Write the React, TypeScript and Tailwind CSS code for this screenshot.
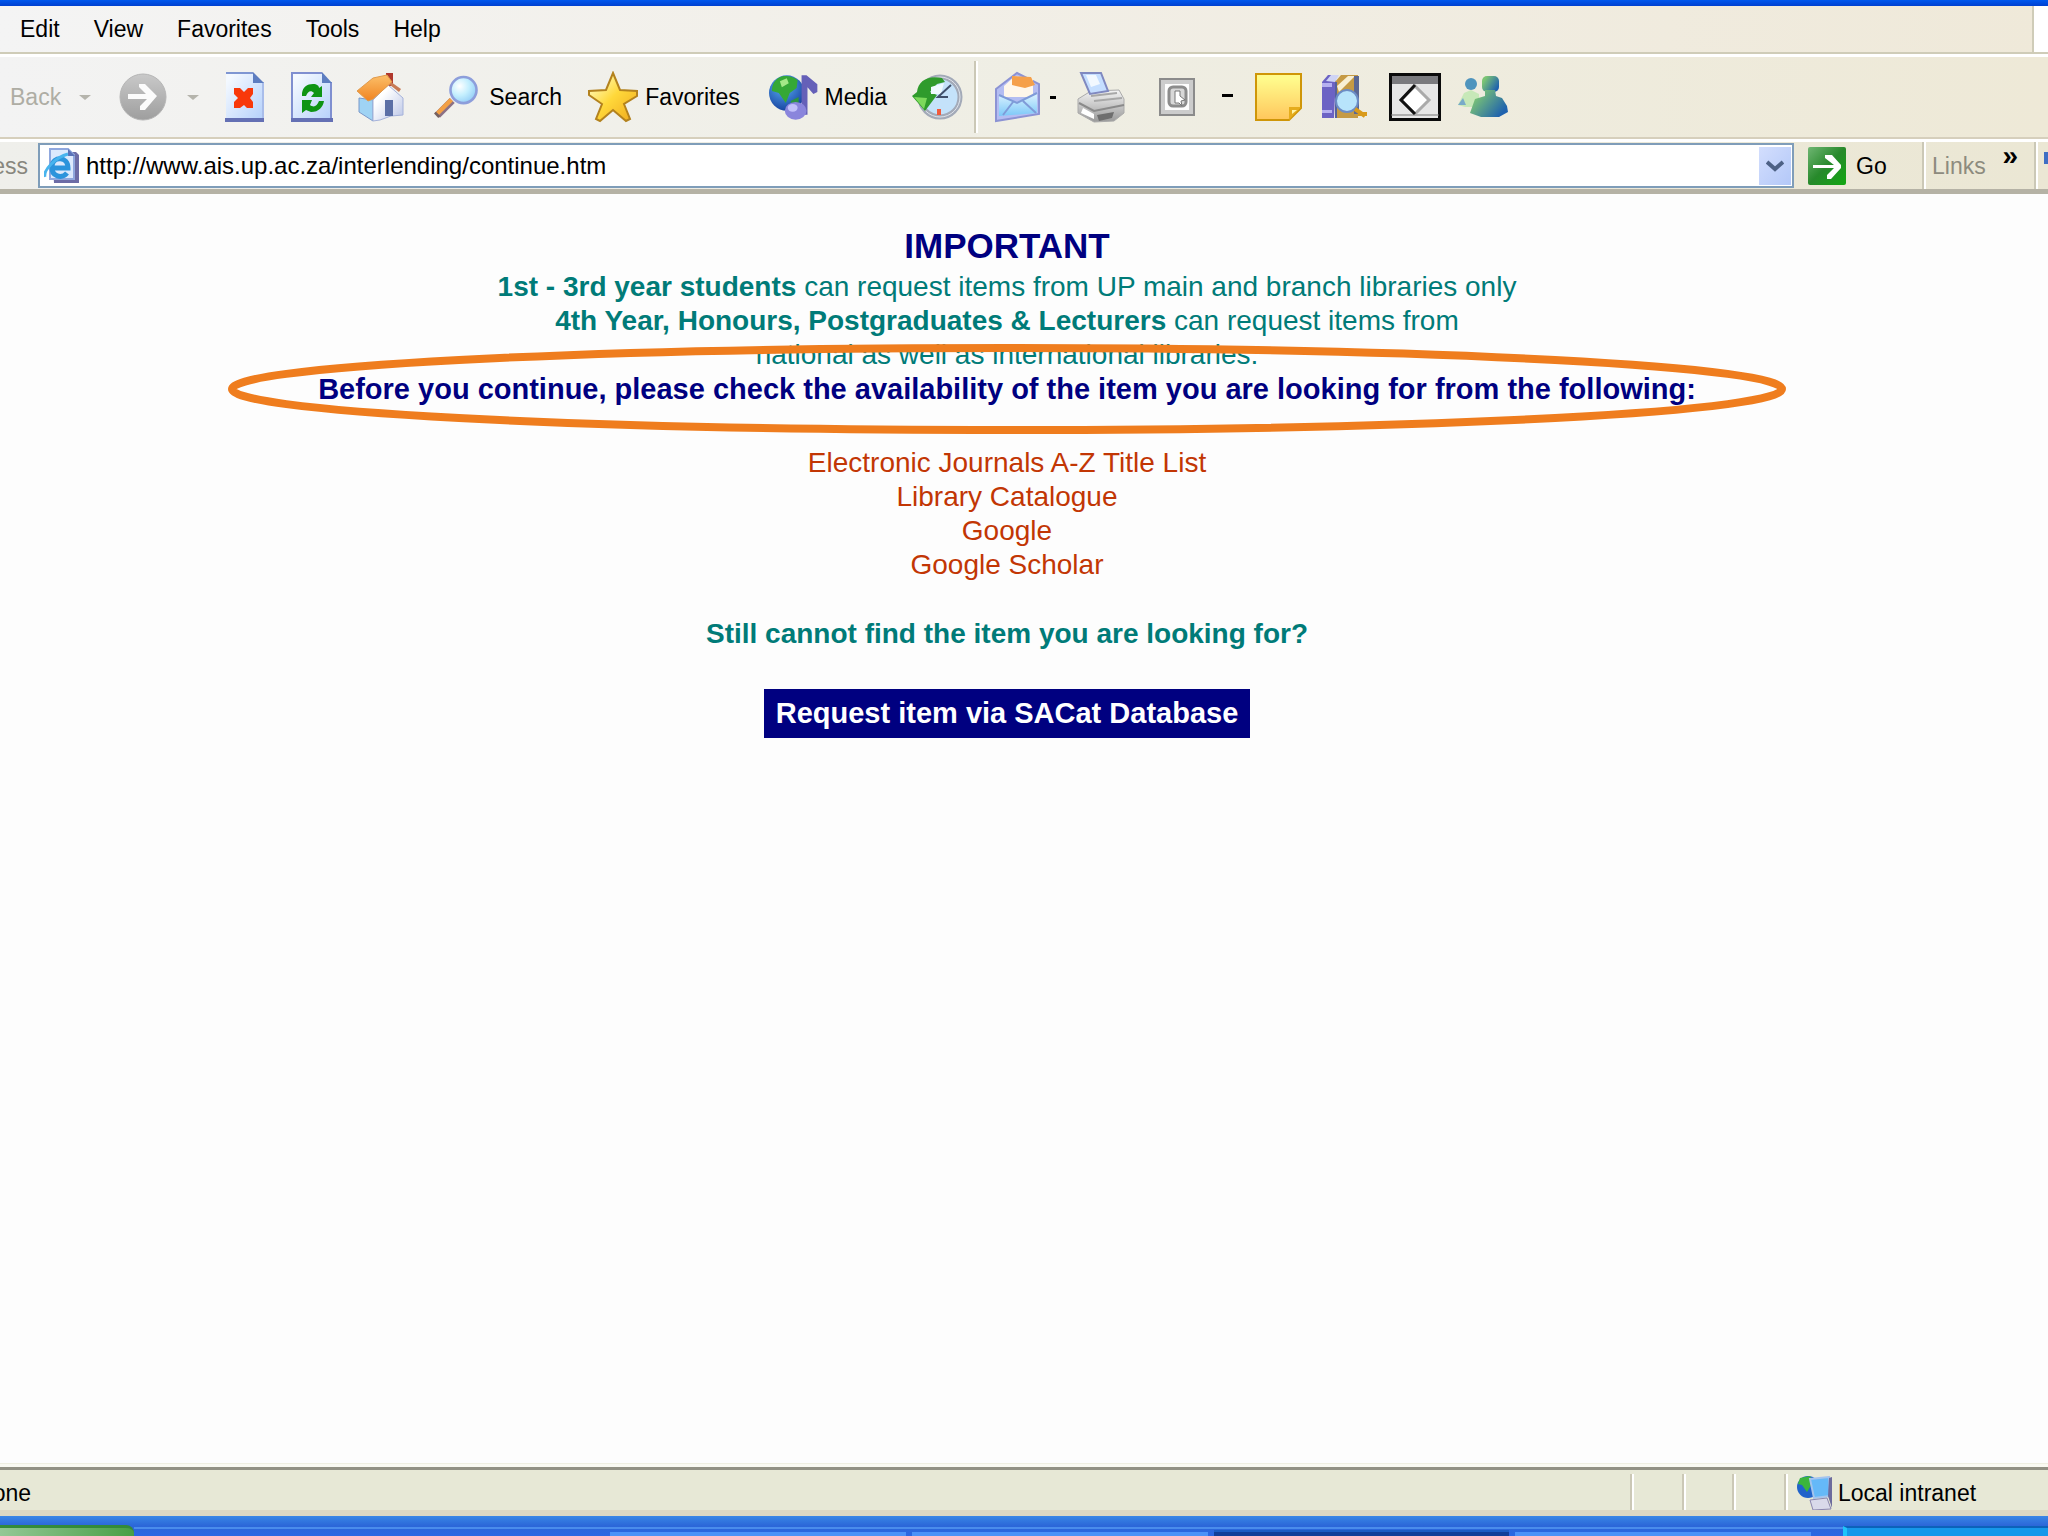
import React from 'react';

function StopIcon() {
  return (
    <svg width="40" height="50" viewBox="0 0 40 50" aria-hidden="true">
      <defs>
        <linearGradient id="paper" x1="0" y1="0" x2="1" y2="1">
          <stop offset="0.1" stopColor="#f4f9ff" />
          <stop offset="1" stopColor="#b4d0fb" />
        </linearGradient>
      </defs>
      <path d="M1 1H28L38 11V48H1Z" fill="url(#paper)" />
      <path d="M1 1H28" stroke="#7f96d2" strokeWidth="2" />
      <path d="M38 10V48" stroke="#a9bdea" strokeWidth="2" />
      <path d="M0 48H39" stroke="#6470b4" strokeWidth="4" />
      <path d="M28 0L39 11H28Z" fill="#5d7dc0" />
      <path d="M9 16h6l4 4 4-4h5v6l-3 4 3 4v6h-6l-3-3-4 3H9v-6l4-4-4-4Z" fill="#f8380a" />
    </svg>
  );
}

function RefreshIcon() {
  return (
    <svg width="42" height="50" viewBox="0 0 42 50" aria-hidden="true">
      <path d="M1 1H31L41 11V48H1Z" fill="url(#paper)" />
      <path d="M1 48V1H31M40 10V48" stroke="#7f8fd0" strokeWidth="2" fill="none" />
      <path d="M0 48H42" stroke="#6470b4" strokeWidth="4" />
      <path d="M31 0L41 11H31Z" fill="#5d7dc0" />
      <path d="M11 21C12 15 16 12 22 12C26 12 28 14 28 16L31 14V25H20L23 21C20 18 17 19 15 24H11Z" fill="#0e9414" />
      <path d="M33 29C32 35 28 40 20 40L15 38L11 41V28H21L19 33C23 36 26 34 28 29Z" fill="#0e9414" />
    </svg>
  );
}

function HomeIcon() {
  return (
    <svg width="50" height="50" viewBox="0 0 50 50" aria-hidden="true">
      <defs>
        <linearGradient id="roof" x1="0" y1="0" x2="0" y2="1">
          <stop offset="0" stopColor="#fcc06a" />
          <stop offset="1" stopColor="#f08320" />
        </linearGradient>
        <linearGradient id="wall" x1="0" y1="0" x2="1" y2="1">
          <stop offset="0.3" stopColor="#ffffff" />
          <stop offset="1" stopColor="#b9c4e6" />
        </linearGradient>
      </defs>
      <path d="M3 26L17 28V49L3 40Z" fill="#9fd3f4" stroke="#7b98c9" strokeWidth="1" />
      <path d="M30 1h7v13h-7Z" fill="#b0382d" />
      <path d="M17 49V28L32 13L47 26V43L35 44L24 48Z" fill="url(#wall)" stroke="#a5b2da" strokeWidth="1" />
      <path d="M1 19L17 6L31 3L36 10L17 27L12 29Z" fill="url(#roof)" stroke="#e09a4c" strokeWidth="1" />
      <path d="M35 10L45 17L43 20L34 13Z" fill="#c77a55" />
      <path d="M29 28H37V44H29Z" fill="#5b6fa6" />
    </svg>
  );
}

function SearchIcon() {
  return (
    <svg width="52" height="50" viewBox="0 0 52 50" aria-hidden="true">
      <defs>
        <radialGradient id="lens" cx="0.35" cy="0.35" r="0.8">
          <stop offset="0" stopColor="#ffffff" />
          <stop offset="0.45" stopColor="#c4effe" />
          <stop offset="1" stopColor="#86c4f4" />
        </radialGradient>
      </defs>
      <path d="M4 46L21 29" stroke="#8b7186" strokeWidth="8" />
      <path d="M4 44L20 28" stroke="#f3a044" strokeWidth="5" />
      <path d="M1 43l5 5" stroke="#75605f" strokeWidth="3" />
      <circle cx="34" cy="17" r="15" fill="url(#lens)" stroke="#8d9edb" strokeWidth="3" />
    </svg>
  );
}

function StarIcon() {
  return (
    <svg width="52" height="52" viewBox="0 0 52 52" aria-hidden="true">
      <defs>
        <linearGradient id="gold" x1="0" y1="0" x2="1" y2="1">
          <stop offset="0.2" stopColor="#fff3a0" />
          <stop offset="0.5" stopColor="#ffd83a" />
          <stop offset="1" stopColor="#efa81c" />
        </linearGradient>
      </defs>
      <path
        d="M26 2L33 19L50 20V25L37 33L43 48L39 50L26 39L13 50L9 48L15 33L2 24V20L19 19Z"
        fill="url(#gold)"
        stroke="#b3821e"
        strokeWidth="2"
      />
    </svg>
  );
}

function MediaIcon() {
  return (
    <svg width="50" height="48" viewBox="0 0 50 48" aria-hidden="true">
      <defs>
        <radialGradient id="globe" cx="0.4" cy="0.3" r="0.75">
          <stop offset="0" stopColor="#5ab0f5" />
          <stop offset="1" stopColor="#143d9c" />
        </radialGradient>
      </defs>
      <circle cx="18" cy="20" r="18" fill="url(#globe)" />
      <path d="M9 5C15 1 25 3 29 7L28 15L21 20L17 30L10 20L3 18C3 12 5 8 9 5Z" fill="#35a836" />
      <path d="M11 8l7-3 2 5-7 4Z" fill="#a4e887" />
      <path d="M22 28l8-4v8l-7 6Z" fill="#2d9442" />
      <path d="M33 2h5L49 11V19L45 21L39 14V42H33Z" fill="#6560b8" />
      <ellipse cx="27" cy="38" rx="11" ry="9" fill="#8a85dc" />
      <ellipse cx="24" cy="35" rx="5" ry="4" fill="#c2c0fa" />
    </svg>
  );
}

function HistoryIcon() {
  return (
    <svg width="52" height="48" viewBox="0 0 52 48" aria-hidden="true">
      <circle cx="29" cy="24" r="20" fill="#c4e2fa" stroke="#a3aab8" strokeWidth="5" />
      <circle cx="29" cy="24" r="20" fill="none" stroke="#dfe3ea" strokeWidth="1" />
      <path d="M6 19C7 7 18 2 31 5L34 9L26 11L19 19L26 22L14 38L1 23Z" fill="#2f9b2c" />
      <path d="M3 24L13 36L16 25Z" fill="#7cd95b" />
      <path d="M20 14L33 10L30 21L20 21Z" fill="#eefaff" />
      <path d="M40 12L27 24H37" stroke="#40506b" strokeWidth="2" fill="none" />
      <path d="M28 36V42" stroke="#f25a3c" strokeWidth="4" />
    </svg>
  );
}

function MailIcon() {
  return (
    <svg width="46" height="52" viewBox="0 0 46 52" aria-hidden="true">
      <defs>
        <linearGradient id="mail" x1="0" y1="0" x2="0" y2="1">
          <stop offset="0" stopColor="#dff4ff" />
          <stop offset="1" stopColor="#7cc8f8" />
        </linearGradient>
      </defs>
      <path d="M1 18L22 2L44 13V43L1 50Z" fill="#b4bdf2" stroke="#8c93d4" strokeWidth="2" />
      <path d="M9 15L20 5L38 8V26H9Z" fill="#fff7ea" />
      <path d="M17 5L36 6L40 14L30 17L17 14Z" fill="#f5a04a" />
      <path d="M4 25L22 31L42 22V42L4 45Z" fill="url(#mail)" />
      <path d="M4 24L22 32L42 22M8 44L18 31M41 42L28 30" stroke="#7f9bd8" strokeWidth="2" fill="none" />
    </svg>
  );
}

function PrinterIcon() {
  return (
    <svg width="50" height="52" viewBox="0 0 50 52" aria-hidden="true">
      <defs>
        <linearGradient id="print" x1="0" y1="0" x2="0" y2="1">
          <stop offset="0" stopColor="#f4f4f4" />
          <stop offset="1" stopColor="#999999" />
        </linearGradient>
      </defs>
      <path d="M1 28L14 20L42 19L47 28V42L37 50L17 51L1 42Z" fill="url(#print)" stroke="#aaaaaa" strokeWidth="1" />
      <path d="M4 2H24L31 20L13 23Z" fill="#c5deff" stroke="#8089c0" strokeWidth="2" />
      <path d="M9 4h10l4 9-9 3Z" fill="#f2f8ff" />
      <path d="M14 25L40 22M17 30L45 27" stroke="#a8a8a8" strokeWidth="2" />
      <path d="M2 32L17 40L47 34" stroke="#8a8a8a" strokeWidth="2" fill="none" />
      <path d="M6 37L17 43V48L4 42Z" fill="#ffffff" />
      <path d="M20 44L37 41L35 47L22 50Z" fill="#6e6e6e" />
    </svg>
  );
}

function EditIcon() {
  return (
    <svg width="36" height="38" viewBox="0 0 36 38" aria-hidden="true">
      <rect x="1" y="1" width="34" height="36" fill="#cccccc" stroke="#8b8b8b" strokeWidth="2" />
      <rect x="6" y="6" width="24" height="26" fill="#fdfdfd" />
      <rect x="10" y="9" width="17" height="19" rx="4" fill="#d8d8d8" stroke="#8c8c8c" strokeWidth="3" />
      <path d="M16 13h5v5l5 4-4 1 1 5-3-3h-4Z" fill="#ffffff" stroke="#777777" strokeWidth="1" />
    </svg>
  );
}

function NoteIcon() {
  return (
    <svg width="47" height="48" viewBox="0 0 47 48" aria-hidden="true">
      <defs>
        <linearGradient id="note" x1="0" y1="0" x2="0" y2="1">
          <stop offset="0.1" stopColor="#fffb8c" />
          <stop offset="1" stopColor="#ffc65c" />
        </linearGradient>
      </defs>
      <path d="M1 1H46V35L34 47H1Z" fill="url(#note)" stroke="#cf9608" strokeWidth="2" />
      <path d="M34 47V34H46Z" fill="#e5ac1c" />
      <path d="M37 41V37H42Z" fill="#fff5a8" />
    </svg>
  );
}

function ResearchIcon() {
  return (
    <svg width="48" height="46" viewBox="0 0 48 46" aria-hidden="true">
      <path d="M1 8L7 1H15L13 44H1Z" fill="#6c63c4" />
      <path d="M1 9H11V13H1ZM1 36H11V39H1Z" fill="#b5b0f0" />
      <path d="M5 7L10 1H18L14 8Z" fill="#cfd4f5" />
      <path d="M14 8L20 1H37V44H14Z" fill="#c59a44" />
      <path d="M16 12L27 2H34L18 18Z" fill="#f8efd2" />
      <path d="M33 2H38V40H33Z" fill="#5a6793" />
      <path d="M15 8V44" stroke="#56629b" strokeWidth="2" />
      <circle cx="26" cy="27" r="11" fill="#b8e4fb" stroke="#6c8cc4" strokeWidth="2" />
      <path d="M34 35L44 42M37 40h9" stroke="#d99a1a" strokeWidth="4" />
    </svg>
  );
}

function FrameIcon() {
  return (
    <svg width="52" height="48" viewBox="0 0 52 48" aria-hidden="true">
      <rect x="1" y="1" width="50" height="46" fill="#e6e6e6" stroke="#0a0a0a" strokeWidth="4" />
      <path d="M3 3H49V11H3Z" fill="#7a7a7e" />
      <path d="M2 42H50" stroke="#777777" strokeWidth="1" />
      <path d="M26 13L40 27L26 41L12 27Z" fill="#ffffff" stroke="#aaaaaa" strokeWidth="3" />
      <path d="M26 12L12 27L26 41" fill="none" stroke="#111111" strokeWidth="3" />
    </svg>
  );
}

function MessengerIcon() {
  return (
    <svg width="52" height="42" viewBox="0 0 52 42" aria-hidden="true">
      <defs>
        <linearGradient id="buddy" x1="0" y1="0" x2="1" y2="0.6">
          <stop offset="0.2" stopColor="#7cc574" />
          <stop offset="1" stopColor="#1f62ae" />
        </linearGradient>
      </defs>
      <circle cx="14" cy="8" r="6" fill="#4f94bd" />
      <path d="M1 29L7 17L14 14L22 18V31H8Z" fill="#c7e8b8" />
      <path d="M1 29L6 22L9 29Z" fill="#79abc8" />
      <rect x="25" y="0" width="17" height="16" rx="5" fill="url(#buddy)" />
      <path d="M28 14H38L39 20L45 22L50 30L51 36L42 41H24L13 37L18 23L28 20Z" fill="url(#buddy)" />
    </svg>
  );
}

function ForwardIcon() {
  return (
    <svg width="48" height="48" viewBox="0 0 48 48" aria-hidden="true">
      <defs>
        <linearGradient id="fwd" x1="0" y1="0" x2="0" y2="1">
          <stop offset="0" stopColor="#c9c9c9" />
          <stop offset="1" stopColor="#9e9e9e" />
        </linearGradient>
      </defs>
      <circle cx="24" cy="24" r="23" fill="url(#fwd)" stroke="#b5b5b5" strokeWidth="1" />
      <path d="M9 21H27L20 14V11H26L38 23L26 37H21V33L28 26H9Z" fill="#fbfbfb" />
    </svg>
  );
}

function PageIcon() {
  return (
    <svg width="36" height="36" viewBox="0 0 36 36" aria-hidden="true">
      <path d="M8 4H32L35 7V35H10Z" fill="#6c6ca6" />
      <path d="M6 1H24L30 7V31H6Z" fill="#dce9fd" stroke="#90a8de" strokeWidth="2" />
      <path d="M24 1v7h7Z" fill="#5972b8" />
      <path d="M8 20H24C24 8 9 8 8 18C7 29 18 31 23 25" fill="none" stroke="#2c94dc" strokeWidth="5" />
      <path d="M1 29C-1 22 12 9 24 6" fill="none" stroke="#48b4ee" strokeWidth="3" />
    </svg>
  );
}

function GoIcon() {
  return (
    <svg width="38" height="38" viewBox="0 0 38 38" aria-hidden="true">
      <defs>
        <linearGradient id="go" x1="0" y1="0" x2="1" y2="1">
          <stop offset="0" stopColor="#6fb673" />
          <stop offset="0.5" stopColor="#27892b" />
          <stop offset="1" stopColor="#12a812" />
        </linearGradient>
      </defs>
      <rect width="38" height="38" rx="2" fill="url(#go)" />
      <path d="M5 18H26L17 11V8H24L33 18V21L23 32H19V28L26 21H5Z" fill="#ffffff" />
    </svg>
  );
}

function IntranetIcon() {
  return (
    <svg width="36" height="34" viewBox="0 0 36 34" aria-hidden="true">
      <circle cx="12" cy="11" r="11" fill="#2163ca" />
      <path d="M4 2L14 0L17 6L11 16L6 9L2 8Z" fill="#3bb53c" />
      <path d="M14 3L33 1L34 20L18 22Z" fill="#65b9f8" stroke="#a4c4ee" strokeWidth="2" />
      <path d="M33 2L36 1V32L32 20Z" fill="#6c6b9d" />
      <path d="M14 24L31 22L35 33L17 34Z" fill="#d9daea" stroke="#8b87ae" strokeWidth="1" />
    </svg>
  );
}

function Caret() {
  return <span className="border-x-6 border-t-5 border-x-transparent border-t-[#b5b4ac]" />;
}

function Divider({ className = '' }: { className?: string }) {
  return <span className={'w-1 shrink-0 self-stretch border-l-2 border-[#cbc8b6] bg-white ' + className} />;
}

function ToolButton({
  className,
  name,
  label,
  children,
}: {
  className: string;
  name: string;
  label?: string;
  children: React.ReactNode;
}) {
  return (
    <button type="button" aria-label={name} className={'flex shrink-0 items-center ' + className}>
      {children}
      {label && <span>{label}</span>}
    </button>
  );
}

const links = ['Electronic Journals A-Z Title List', 'Library Catalogue', 'Google', 'Google Scholar'];

export default function App() {
  return (
    <div className="flex min-h-screen flex-col overflow-hidden bg-[#fdfdfd] font-['Liberation_Sans',Arial,sans-serif] text-[23px] leading-7 text-black">
      <div className="h-1.5 bg-linear-to-b from-[#0058ee] to-[#0040d0]" />

      <header>
        <div className="flex h-12 border-b-2 border-[#cfccb8] bg-linear-to-r from-[#f4f4f4] to-[#efe9d9]">
          <nav className="flex flex-1 items-center gap-[34px] pl-5">
            <button type="button">Edit</button>
            <button type="button">View</button>
            <button type="button">Favorites</button>
            <button type="button">Tools</button>
            <button type="button">Help</button>
          </nav>
          <div className="w-4 border-l-2 border-[#cfccb8] bg-white" />
        </div>

        <div className="flex h-[85px] items-center border-t-3 border-b-2 border-t-white border-b-[#d6cfbc] bg-linear-to-r from-[#f3f3f3] via-[#efeee4] to-[#eee9d7]">
          <ToolButton className="ml-[10px] text-[#aeada4]" name="Back">
            <span>Back</span>
          </ToolButton>
          <ToolButton className="ml-[18px]" name="Back history">
            <Caret />
          </ToolButton>
          <ToolButton className="ml-7" name="Forward">
            <ForwardIcon />
          </ToolButton>
          <ToolButton className="ml-5" name="Forward history">
            <Caret />
          </ToolButton>
          <ToolButton className="ml-[26px]" name="Stop">
            <StopIcon />
          </ToolButton>
          <ToolButton className="ml-[26px]" name="Refresh">
            <RefreshIcon />
          </ToolButton>
          <ToolButton className="ml-[23px]" name="Home">
            <HomeIcon />
          </ToolButton>
          <ToolButton className="ml-7 w-[128px] gap-[10px]" name="Search" label="Search">
            <SearchIcon />
          </ToolButton>
          <ToolButton className="ml-[25px] w-[160px] gap-[6px]" name="Favorites" label="Favorites">
            <StarIcon />
          </ToolButton>
          <ToolButton className="ml-[22px] w-[118px] gap-[6px]" name="Media" label="Media">
            <MediaIcon />
          </ToolButton>
          <ToolButton className="ml-6" name="History">
            <HistoryIcon />
          </ToolButton>
          <Divider className="my-1 ml-[11px]" />
          <ToolButton className="ml-[17px]" name="Mail">
            <MailIcon />
          </ToolButton>
          <ToolButton className="ml-[9px]" name="Mail options">
            <span className="h-[3px] w-1.5 bg-black" />
          </ToolButton>
          <ToolButton className="ml-[21px]" name="Print">
            <PrinterIcon />
          </ToolButton>
          <ToolButton className="ml-8" name="Edit page">
            <EditIcon />
          </ToolButton>
          <ToolButton className="ml-[27px]" name="Edit options">
            <span className="mb-1 h-[3px] w-[11px] bg-black" />
          </ToolButton>
          <ToolButton className="ml-[22px]" name="Notes">
            <NoteIcon />
          </ToolButton>
          <ToolButton className="ml-[19px]" name="Research">
            <ResearchIcon />
          </ToolButton>
          <ToolButton className="ml-5" name="Full frame">
            <FrameIcon />
          </ToolButton>
          <ToolButton className="ml-4" name="Messenger">
            <MessengerIcon />
          </ToolButton>
        </div>

        <div className="flex h-[55px] items-stretch border-t-3 border-b-5 border-t-white border-b-[#b5b2a5] bg-linear-to-r from-[#efefeb] to-[#ebe7d4]">
          <label htmlFor="address" className="flex w-[38px] items-center justify-end overflow-hidden pr-2.5 text-[#88877e]">
            Address
          </label>
          <div className="my-px flex flex-1 items-center border-2 border-[#7f9db9] bg-white pl-1">
            <PageIcon />
            <input
              id="address"
              type="text"
              defaultValue="http://www.ais.up.ac.za/interlending/continue.htm"
              className="min-w-0 flex-1 bg-transparent pl-1.5 text-2xl outline-none"
            />
            <button
              type="button"
              aria-label="Show addresses"
              className="mr-px flex h-[38px] w-8 items-center justify-center bg-linear-to-br from-[#d3defd] to-[#b3c8f8]"
            >
              <svg width="18" height="12" viewBox="0 0 18 12" aria-hidden="true">
                <path d="M1 2L9 9L17 2" fill="none" stroke="#4d6185" strokeWidth="4" />
              </svg>
            </button>
          </div>
          <button type="button" className="ml-[14px] flex w-[114px] items-center gap-[10px]">
            <GoIcon />
            <span>Go</span>
          </button>
          <Divider />
          <button type="button" className="flex w-[108px] items-center pl-1.5 text-[#8d8b7e]">
            <span>Links</span>
            <span className="mb-5 ml-auto pr-4 text-[28px] leading-4 font-bold text-black">»</span>
          </button>
          <Divider />
          <div className="flex w-2.5 items-center justify-end">
            <span className="mb-4 h-3 w-1 bg-[#3f6fc4]" />
          </div>
        </div>
      </header>

      <main className="flex flex-1 flex-col items-center pt-8 pr-[34px] text-center text-[28px] leading-[34px] text-[#007b78]">
        <h1 className="pb-1 text-[35px] leading-10 font-bold text-[#000080]">IMPORTANT</h1>
        <p>
          <b>1st - 3rd year students</b> can request items from UP main and branch libraries only
        </p>
        <p>
          <b>4th Year, Honours, Postgraduates &amp; Lecturers</b> can request items from
          <br />
          national as well as international libraries.
        </p>
        <div className="relative">
          <p className="text-[29px] font-bold text-[#000080]">
            Before you continue, please check the availability of the item you are looking for from the following:
          </p>
          <svg
            className="absolute top-1/2 left-1/2 -translate-x-1/2 -translate-y-1/2"
            width="1558"
            height="90"
            viewBox="0 0 1558 90"
            aria-hidden="true"
          >
            <ellipse cx="779" cy="45" rx="775" ry="41" fill="none" stroke="#ef7d1e" strokeWidth="8" />
          </svg>
        </div>
        <ul className="mt-10">
          {links.map((text) => (
            <li key={text}>
              <a href="#" className="text-[#c23604]">
                {text}
              </a>
            </li>
          ))}
        </ul>
        <p className="mt-[35px] font-bold">Still cannot find the item you are looking for?</p>
        <button type="button" className="mt-[38px] bg-[#000080] px-3 py-2 text-[29px] leading-[33px] font-bold text-white">
          Request item via SACat Database
        </button>
      </main>

      <footer>
        <div className="h-1 border-t border-[#efefe2] bg-[#fafaf2]" />
        <div className="flex h-[49px] items-stretch border-t-3 border-b-6 border-t-[#929184] border-b-[#dcd8c4] bg-[#e7e8d6]">
          <div className="flex w-[31px] items-center justify-end overflow-hidden pt-1.5">Done</div>
          <div className="flex-1" />
          <Divider className="mt-1" />
          <div className="w-12" />
          <Divider className="mt-1" />
          <div className="w-[46px]" />
          <Divider className="mt-1" />
          <div className="w-12" />
          <Divider className="mt-1" />
          <div className="flex w-[260px] items-center gap-1.5 pt-1.5 pl-2">
            <IntranetIcon />
            <span>Local intranet</span>
          </div>
        </div>
        <div className="flex h-5 items-end bg-linear-to-b from-[#3a86e6] via-[#2b66d8] to-[#2a68e4]">
          <div className="h-[11px] w-[134px] rounded-tr-lg border-t-3 border-[#338a3b] bg-linear-to-r from-[#93c895] to-[#479f45]" />
          <div className="flex h-[9px] flex-1 items-end gap-1.5 border-t-2 border-[#4a8ceb] pr-8 pl-[476px]">
            <div className="h-1 flex-1 bg-[#4b92f8]" />
            <div className="h-1 flex-1 bg-[#4b92f8]" />
            <div className="h-1.5 flex-1 border-t-2 border-[#1a5cc4] bg-[#103f99]" />
            <div className="h-1 flex-1 bg-[#4b92f8]" />
          </div>
          <div className="h-[10px] w-[205px] border-t-2 border-l-4 border-t-[#0c62ba] border-l-[#1fc4fb] bg-[#1698ea]" />
        </div>
      </footer>
    </div>
  );
}
